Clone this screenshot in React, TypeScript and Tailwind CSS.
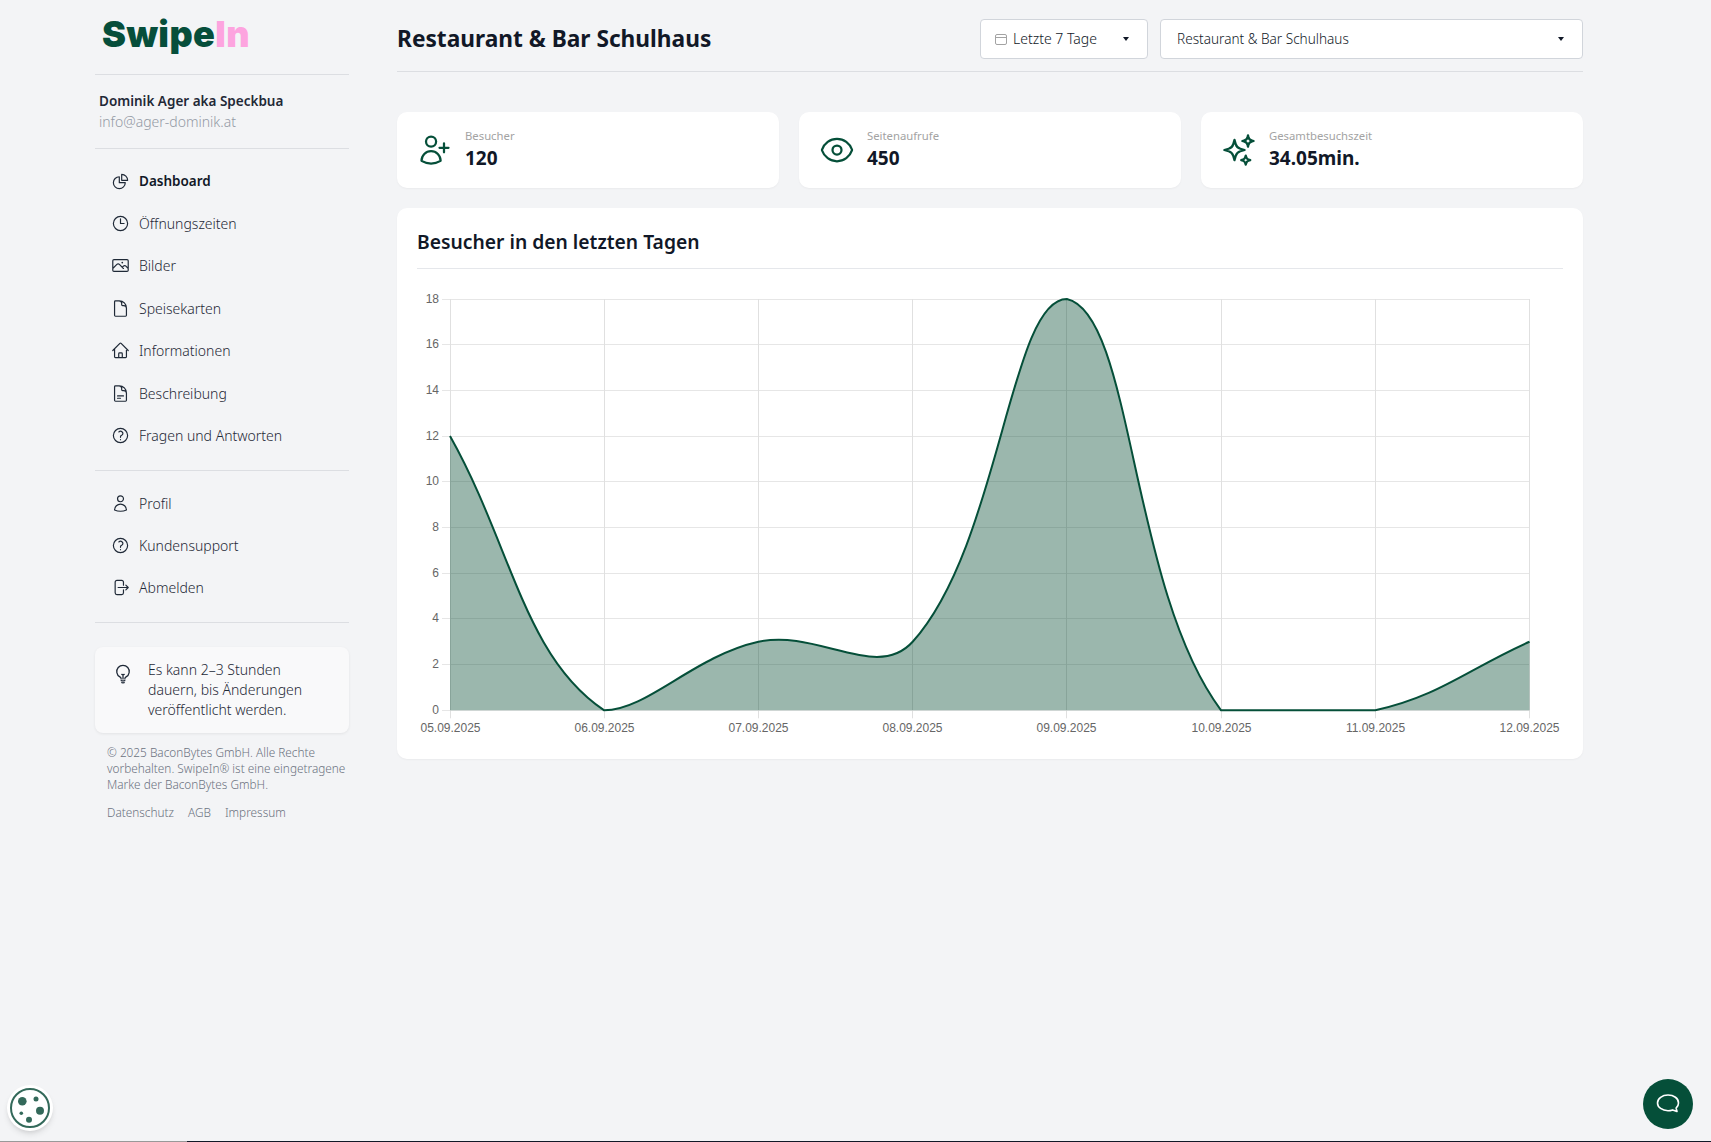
import React from "react";
import {
  HiOutlineChartPie, HiOutlineClock, HiOutlinePhoto, HiOutlineDocument, HiOutlineHome,
  HiOutlineDocumentText, HiOutlineQuestionMarkCircle, HiOutlineUser, HiOutlineArrowRightOnRectangle,
  HiOutlineLightBulb, HiOutlineUserPlus, HiOutlineEye, HiOutlineSparkles,
} from "react-icons/hi2";

const main = [
  { label: "Dashboard", Icon: HiOutlineChartPie, active: true },
  { label: "Öffnungszeiten", Icon: HiOutlineClock },
  { label: "Bilder", Icon: HiOutlinePhoto },
  { label: "Speisekarten", Icon: HiOutlineDocument },
  { label: "Informationen", Icon: HiOutlineHome },
  { label: "Beschreibung", Icon: HiOutlineDocumentText },
  { label: "Fragen und Antworten", Icon: HiOutlineQuestionMarkCircle },
];
const second = [
  { label: "Profil", Icon: HiOutlineUser },
  { label: "Kundensupport", Icon: HiOutlineQuestionMarkCircle },
  { label: "Abmelden", Icon: HiOutlineArrowRightOnRectangle },
];
const stats = [
  { label: "Besucher", value: "120", Icon: HiOutlineUserPlus },
  { label: "Seitenaufrufe", value: "450", Icon: HiOutlineEye },
  { label: "Gesamtbesuchszeit", value: "34.05min.", Icon: HiOutlineSparkles },
];

function NavRow({ item }: { item: { label: string; Icon: any; active?: boolean } }) {
  const { Icon } = item;
  return (
    <div className="flex h-[42.4px] items-center pl-[16px]">
      <Icon className="h-[19px] w-[19px] text-[#1f2937]" />
      <span className={"ml-[9px] text-[#1f2937] " + (item.active ? "text-[13.5px] font-semibold text-[#111827]" : "text-[14px] font-light")}>{item.label}</span>
    </div>
  );
}

function Caret() {
  return <span className="h-0 w-0 border-x-[3px] border-t-[4px] border-x-transparent border-t-[#111827]" />;
}

const W = 1145;
const X0 = 33;
const X1 = 1112.5;
const Y0 = 9;
const Y1 = 420.3;
const data = [12, 0, 3, 3, 18, 0, 0, 3];
const dates = ["05.09.2025", "06.09.2025", "07.09.2025", "08.09.2025", "09.09.2025", "10.09.2025", "11.09.2025", "12.09.2025"];
const ticks = [18, 16, 14, 12, 10, 8, 6, 4, 2, 0];

function curvePath() {
  const pts = data.map((v, i) => ({ x: X0 + ((X1 - X0) * i) / 7, y: Y1 - ((Y1 - Y0) * v) / 18 }));
  const t = 0.4;
  const clampY = (y: number) => Math.min(Y1, Math.max(Y0, y));
  const clampX = (x: number) => Math.min(X1, Math.max(X0, x));
  const cps = pts.map((cur, i) => {
    const prev = pts[i - 1] || cur;
    const next = pts[i + 1] || cur;
    const d01 = Math.hypot(cur.x - prev.x, cur.y - prev.y);
    const d12 = Math.hypot(next.x - cur.x, next.y - cur.y);
    const s = d01 + d12 || 1;
    const fa = (t * d01) / s;
    const fb = (t * d12) / s;
    return {
      px: clampX(cur.x - fa * (next.x - prev.x)),
      py: clampY(cur.y - fa * (next.y - prev.y)),
      nx: clampX(cur.x + fb * (next.x - prev.x)),
      ny: clampY(cur.y + fb * (next.y - prev.y)),
    };
  });
  let d = `M${pts[0].x} ${pts[0].y}`;
  for (let i = 1; i < pts.length; i++) {
    d += ` C${cps[i - 1].nx} ${cps[i - 1].ny} ${cps[i].px} ${cps[i].py} ${pts[i].x} ${pts[i].y}`;
  }
  return d;
}

function Chart() {
  const line = curvePath();
  const area = `${line} L${X1} ${Y1} L${X0} ${Y1} Z`;
  return (
    <svg width={W} height={449} className="mt-[21px] block" style={{ fontFamily: '"Liberation Sans", sans-serif' }}>
      {ticks.map((v) => {
        const y = Math.floor(Y1 - ((Y1 - Y0) * v) / 18) + 0.5;
        return (
          <g key={v}>
            <line x1={X0 - 8} x2={X1} y1={y} y2={y} stroke="#e6e6e6" strokeWidth={1} />
            <text x={X0 - 11} y={y + 3.5} textAnchor="end" fontSize={12} fill="#666666">{v}</text>
          </g>
        );
      })}
      {dates.map((d, i) => {
        const x = Math.floor(X0 + ((X1 - X0) * i) / 7) + 0.5;
        return (
          <g key={d}>
            <line x1={x} x2={x} y1={Y0} y2={Y1 + 8} stroke="#e0e0e0" strokeWidth={1} />
            <text x={x} y={Y1 + 21.5} textAnchor="middle" fontSize={12} fill="#666666">{d}</text>
          </g>
        );
      })}
      <path d={area} fill="rgba(5,75,50,0.4)" />
      <path d={line} fill="none" stroke="#054f39" strokeWidth={2} />
    </svg>
  );
}

export default function App() {
  return (
    <div className="relative h-[1142px] w-full overflow-hidden bg-[#f3f4f6] text-[#111827]" style={{ fontFamily: '"Noto Sans", Roboto, sans-serif' }}>
      <div className="flex gap-[48px] pl-[95px]">
        <aside className="w-[254px] shrink-0">
          <div className="flex h-[75px] items-start border-b border-[#dcdee2] pl-[7px] pt-[10px]">
            <div className="text-[36px] font-black leading-[48px] tracking-[0.4px]" style={{ fontFamily: 'Inter, sans-serif' }}>
              <span className="text-[#064e3b]">Swipe</span><span className="text-[#fda4df]">In</span>
            </div>
          </div>
          <div className="h-[74px] border-b border-[#dcdee2] pl-[4px] pt-[16px]">
            <div className="text-[13.5px] font-semibold leading-[20px] text-[#1f2937]">Dominik Ager aka Speckbua</div>
            <div className="text-[14px] font-light leading-[22px] text-[#949aa5]">info@ager-dominik.at</div>
          </div>
          <nav className="h-[322px] border-b border-[#dcdee2] pt-[11px]">
            {main.map((it) => <NavRow key={it.label} item={it} />)}
          </nav>
          <nav className="h-[152px] border-b border-[#dcdee2] pt-[11px]">
            {second.map((it) => <NavRow key={it.label} item={it} />)}
          </nav>
          <div className="mt-[24px] flex h-[86px] items-start rounded-lg bg-[#f9f9fa] pl-[18px] pt-[13px] shadow-[0_1px_3px_rgba(0,0,0,0.07)]">
            <HiOutlineLightBulb className="mt-[4px] h-[20px] w-[20px] shrink-0 text-[#1f2937]" />
            <p className="ml-[15px] text-[14px] font-light leading-[20px] text-[#1f2937]">Es kann 2–3 Stunden<br />dauern, bis Änderungen<br />veröffentlicht werden.</p>
          </div>
          <div className="pl-[12px] pt-[11px] text-[11.8px] font-light leading-[16px] text-[#6b7280]">
            <p>© 2025 BaconBytes GmbH. Alle Rechte<br />vorbehalten. SwipeIn® ist eine eingetragene<br />Marke der BaconBytes GmbH.</p>
            <div className="mt-[12px] flex gap-[14px]"><span>Datenschutz</span><span>AGB</span><span>Impressum</span></div>
          </div>
        </aside>
        <main className="w-[1186px] shrink-0">
          <header className="flex h-[72px] items-start border-b border-[#dcdee2] pt-[19px]">
            <h1 className="mr-auto text-[22.7px] font-bold leading-[39px]">Restaurant &amp; Bar Schulhaus</h1>
            <div className="flex h-[40px] w-[168px] items-center rounded border border-[#d1d5db] bg-white pl-[14px] pr-[18px]">
              <svg width="12" height="12" viewBox="0 0 12 12" fill="none" stroke="#a3a3a3" className="mr-[6px] shrink-0"><rect x="0.5" y="1.5" width="11" height="10" rx="1.5" /><path d="M0.5 4.5h11" /></svg>
              <span className="mr-auto pb-[2px] text-[14px] font-light">Letzte 7 Tage</span>
              <Caret />
            </div>
            <div className="ml-[12px] flex h-[40px] w-[423px] items-center rounded border border-[#d1d5db] bg-white pl-[16px] pr-[18px]">
              <span className="mr-auto text-[13.6px] font-light">Restaurant &amp; Bar Schulhaus</span>
              <Caret />
            </div>
          </header>
          <section className="mt-[40px] grid grid-cols-3 gap-[20px]">
            {stats.map(({ label, value, Icon }) => (
              <div key={label} className="flex h-[76px] items-center rounded-[10px] bg-white pl-[20px] shadow-[0_1px_2px_rgba(0,0,0,0.04)]">
                <Icon className="h-[36px] w-[36px] shrink-0 text-[#054f39]" />
                <div className="ml-[12px]">
                  <div className="text-[11.3px] font-normal leading-[15px] text-[#a3a3a3]">{label}</div>
                  <div className="mt-[2px] text-[19px] font-bold leading-[27px]">{value}</div>
                </div>
              </div>
            ))}
          </section>
          <section className="mt-[20px] h-[551px] rounded-[10px] bg-white px-[20px] pt-[20px] shadow-[0_1px_2px_rgba(0,0,0,0.04)]">
            <h2 className="border-b border-[#e5e7eb] pb-[12px] text-[19.3px] font-semibold leading-[28px]">Besucher in den letzten Tagen</h2>
            <Chart />
          </section>
        </main>
      </div>
      <div className="absolute left-[7px] top-[1085px] flex h-[46px] w-[46px] items-center justify-center rounded-full bg-white shadow-md">
        <svg width="42" height="42" viewBox="0 0 42 42">
          <circle cx="21" cy="21" r="19" fill="none" stroke="#33695a" strokeWidth="2" />
          <g fill="#33695a">
            <circle cx="13.3" cy="14.3" r="4.3" /><circle cx="27" cy="12" r="2.5" /><circle cx="31" cy="23.7" r="4" /><circle cx="12.3" cy="26.3" r="1.8" /><circle cx="20" cy="32.7" r="3" />
          </g>
        </svg>
      </div>
      <div className="absolute left-[1643px] top-[1079px] flex h-[50px] w-[50px] items-center justify-center rounded-full bg-[#054f39]">
        <svg width="24" height="24" viewBox="0 0 24 24" fill="none" stroke="#ffffff" strokeWidth="1.6" strokeLinejoin="round"><path d="M12 3c5.8 0 10.5 3.4 10.5 7.9 0 2-.9 3.8-2.4 5.2l.9 3.4-4.4-1.6c-1.4.5-3 .8-4.6.8-5.8 0-10.5-3.4-10.5-7.8S6.200 3 12 3z" /></svg>
      </div>
      <div className="absolute bottom-0 left-0 flex h-[1px] w-full">
        <div className="w-[187px] bg-[#999999]" />
        <div className="flex-1 bg-[#111827]" />
      </div>
    </div>
  );
}
